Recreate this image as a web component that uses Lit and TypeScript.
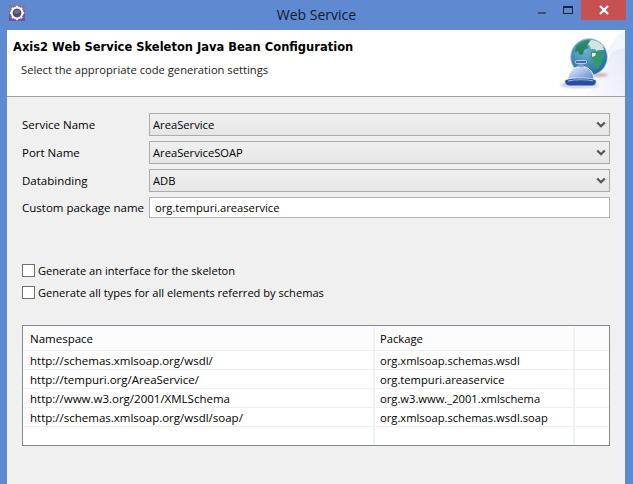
import { LitElement, html, css, svg } from "lit";
import { customElement } from "lit/decorators.js";

const rows = [
  ["http://schemas.xmlsoap.org/wsdl/", "org.xmlsoap.schemas.wsdl"],
  ["http://tempuri.org/AreaService/", "org.tempuri.areaservice"],
  ["http://www.w3.org/2001/XMLSchema", "org.w3.www._2001.xmlschema"],
  ["http://schemas.xmlsoap.org/wsdl/soap/", "org.xmlsoap.schemas.wsdl.soap"],
  ["", ""],
];

const gear = svg`<svg width="16" height="16" viewBox="0 0 16 16">
  <rect width="16" height="16" fill="#6a55a0"/>
  <rect width="16" height="6" fill="#7d7a9c"/>
  <circle cx="8" cy="8" r="5.4" fill="none" stroke="#f4f4f4" stroke-width="2.2"/>
  <g stroke="#f4f4f4" stroke-width="2">
    <path d="M8 .8V3M8 13v2.2M.8 8H3M13 8h2.2M2.9 2.9l1.5 1.5M11.6 11.6l1.5 1.5M13.1 2.9l-1.5 1.5M4.4 11.6l-1.5 1.5"/>
  </g>
  <circle cx="8" cy="8" r="4.2" fill="#4c4a66"/>
  <ellipse cx="8" cy="6.8" rx="3" ry="2" fill="#6f6d88"/>
</svg>`;

const globe = svg`<svg width="70" height="66" viewBox="0 0 70 66">
  <defs>
    <radialGradient id="g" cx=".4" cy=".32" r=".78">
      <stop offset="0" stop-color="#6fb3c9"/><stop offset=".6" stop-color="#3a86ad"/><stop offset="1" stop-color="#1f5f95"/>
    </radialGradient>
    <linearGradient id="land" x1="0" y1="0" x2="0" y2="1">
      <stop offset="0" stop-color="#2f8f73"/><stop offset="1" stop-color="#1f7c55"/>
    </linearGradient>
    <linearGradient id="b" x1="0" y1="0" x2="1" y2="1">
      <stop offset="0" stop-color="#e3ecf9"/><stop offset=".45" stop-color="#a9c2e8"/><stop offset="1" stop-color="#4f7cc4"/>
    </linearGradient>
    <linearGradient id="bg" x1="0" y1="1" x2="1" y2="0">
      <stop offset="0" stop-color="#fbfcff"/><stop offset="1" stop-color="#e2e7f6"/>
    </linearGradient>
    <filter id="s" x="-30%" y="-80%" width="160%" height="260%"><feGaussianBlur stdDeviation="1.3"/></filter>
  </defs>
  <path d="M30 66C42 52 56 20 70 1V66Z" fill="url(#bg)"/>
  <path d="M50 26C56 22 63 19 70 18V1L66 2C60 8 54 17 50 26Z" fill="#f3f5fc"/>
  <ellipse cx="24" cy="55" rx="19" ry="3.200" fill="#8e90ad" opacity=".45" filter="url(#s)"/>
  <ellipse cx="44" cy="45" rx="9" ry="2" fill="#b98d8d" opacity=".6" filter="url(#s)"/>
  <circle cx="34" cy="27" r="18.300" fill="url(#g)" stroke="#a9c2d8" stroke-width=".8"/>
  <path d="M21 17c3-4 8-7 13-7l1 3-3 2 1 3-4 2-1 4-3 1-2-4-3 1z" fill="url(#land)"/>
  <path d="M33 14l3-4c4 0 9 2 12 6l1 4-5 0-3 1-1-2-4 0-1-3z" fill="#cfe7dc"/>
  <path d="M36 22l7-1 4 2 3 2-3 4-1 5-3 5-3-1-1-7-3-3z" fill="#37976b"/>
  <path d="M37 23l4 0-1 3-3 1z" fill="#e4f0e4"/>
  <path d="M23 30l4 1 2 3-1 5-3-2-2-4z" fill="#2f8f73"/>
  <path d="M13 51C13 42 18 36.500 26 36.500S39 42 39 51Z" fill="url(#b)" stroke="#eef3fb" stroke-width="1"/>
  <rect x="23.500" y="33" width="5" height="4" fill="#7fa0d4"/>
  <rect x="20.500" y="30.500" width="11" height="3" rx="1" fill="#3f6ab4" stroke="#e8eef8" stroke-width=".7"/>
  <path d="M10 50c5-2 10-2 16-2s11 0 15 2c1 3-1 6-4 6H15c-4 0-6-3-5-6z" fill="#264fa2" stroke="#f4f6fb" stroke-width=".8"/>
  <path d="M13 51c4-1 8-1.300 13-1.300s9 .3 12 1.300" fill="none" stroke="#9db9e6" stroke-width="1.100"/>
</svg>`;

@customElement("app-root")
export class AppRoot extends LitElement {
  static styles = css`
    :host {
      display: block;
      width: 633px;
      height: 484px;
      overflow: hidden;
      background: #5f8ad2;
      font-family: "Open Sans", "Noto Sans", sans-serif;
      font-size: 11.2px;
      color: #000;
    }
    .titlebar {
      height: 30px;
      display: grid;
      grid-template-columns: 1fr auto 1fr;
      align-items: center;
      box-sizing: border-box;
    }
    .app-icon {
      display: flex;
      padding-left: 9px;
      margin-top: -4px;
    }
    .title {
      font-size: 14px;
      color: #111a2c;
      margin-top: -2px;
    }
    .controls {
      display: flex;
      justify-content: flex-end;
      align-self: start;
      padding-right: 7px;
    }
    .ctl {
      width: 26px;
      height: 20px;
      display: flex;
      align-items: center;
      justify-content: center;
    }
    .ctl.close {
      width: 45px;
      background: #c75050;
    }
    .min-bar {
      width: 8px;
      height: 2px;
      background: #3f4f6c;
      margin-top: 6px;
    }
    .max-box {
      width: 10px;
      height: 8px;
      box-sizing: border-box;
      border: 1px solid #1a2233;
      border-top-width: 2px;
    }
    .dialog {
      margin: 0 8px 0 7px;
      height: 454px;
      background: #f0f0f0;
    }
    .header {
      height: 67px;
      box-sizing: border-box;
      background: #fff;
      border-bottom: 1px solid #a0a0a0;
      display: flex;
      justify-content: space-between;
    }
    .head-text {
      padding: 8px 0 0 6px;
    }
    .head-title {
      font-family: "DejaVu Sans", sans-serif;
      font-weight: bold;
      font-size: 11.5px;
      line-height: 18px;
    }
    .head-sub {
      margin: 6px 0 0 8px;
      line-height: 16px;
      color: #1a1a1a;
    }
    .globe {
      display: flex;
    }
    .form {
      display: grid;
      grid-template-columns: 127px 461px;
      row-gap: 5px;
      padding: 16px 0 0 15px;
      align-items: center;
    }
    .label {
      font-size: 11.5px;
    }
    .select {
      height: 23px;
      box-sizing: border-box;
      border: 1px solid #acacac;
      background: linear-gradient(#f0f0f0, #e5e5e5);
      display: flex;
      align-items: center;
      justify-content: space-between;
      padding: 0 3px 0 3px;
      line-height: 1;
    }
    .input {
      height: 21px;
      box-sizing: border-box;
      border: 1px solid #b4b4b4;
      background: #fff;
      display: flex;
      align-items: center;
      padding-left: 5px;
    }
    .checks {
      display: grid;
      row-gap: 8px;
      padding: 45px 0 0 15px;
    }
    .check {
      display: flex;
      align-items: center;
      gap: 3px;
      height: 14px;
      font-size: 11.1px;
    }
    .box {
      width: 13px;
      height: 13px;
      box-sizing: border-box;
      border: 1px solid #707070;
      background: #fff;
    }
    .table {
      margin: 26px 0 0 15px;
      width: 588px;
      height: 121px;
      box-sizing: border-box;
      border: 1px solid #828790;
      background: #fff;
      overflow: hidden;
    }
    .row {
      display: grid;
      grid-template-columns: 352px 200px 1fr;
      height: 19px;
      box-sizing: border-box;
      border-bottom: 1px solid #f0f0f0;
    }
    .row:last-child {
      border-bottom: 0;
    }
    .row.head {
      height: 25px;
      background: #fcfcfd;
      border-bottom: 1px solid #eef0f3;
      padding-top: 1px;
    }
    .cell {
      padding: 1px 0 0 7px;
      line-height: 17px;
      white-space: nowrap;
      border-right: 2px solid #eef1f6;
      box-sizing: border-box;
    }
    .cell.ns {
      font-size: 11.5px;
    }
    .cell.pkg {
      padding-left: 5px;
    }
    .head .cell {
      line-height: 22px;
    }
    .cell:last-child {
      border-right: 0;
    }
  `;

  private chevron() {
    return svg`<svg width="10" height="8" viewBox="0 0 10 8"><path d="M1.200 1.500 5 5.300 8.800 1.500" fill="none" stroke="#555" stroke-width="2.200"/></svg>`;
  }

  private select(v: string) {
    return html`<div class="select"><span>${v}</span>${this.chevron()}</div>`;
  }

  render() {
    return html`
      <div class="titlebar">
        <div class="app-icon">${gear}</div>
        <div class="title">Web Service</div>
        <div class="controls">
          <div class="ctl"><div class="min-bar"></div></div>
          <div class="ctl"><div class="max-box"></div></div>
          <div class="ctl close">
            <svg width="10" height="10" viewBox="0 0 10 10"><path d="M1 1 9 9M9 1 1 9" stroke="#fff" stroke-width="2.200"/></svg>
          </div>
        </div>
      </div>
      <div class="dialog">
        <div class="header">
          <div class="head-text">
            <div class="head-title">Axis2 Web Service Skeleton Java Bean Configuration</div>
            <div class="head-sub">Select the appropriate code generation settings</div>
          </div>
          <div class="globe">${globe}</div>
        </div>
        <div class="form">
          <div class="label">Service Name</div>${this.select("AreaService")}
          <div class="label">Port Name</div>${this.select("AreaServiceSOAP")}
          <div class="label">Databinding</div>${this.select("ADB")}
          <div class="label">Custom package name</div>
          <div class="input">org.tempuri.areaservice</div>
        </div>
        <div class="checks">
          <div class="check"><div class="box"></div><span>Generate an interface for the skeleton</span></div>
          <div class="check"><div class="box"></div><span>Generate all types for all elements referred by schemas</span></div>
        </div>
        <div class="table">
          <div class="row head"><div class="cell ns">Namespace</div><div class="cell pkg">Package</div><div class="cell"></div></div>
          ${rows.map(
            (r) => html`<div class="row"><div class="cell ns">${r[0]}</div><div class="cell pkg">${r[1]}</div><div class="cell"></div></div>`
          )}
        </div>
      </div>
    `;
  }
}
